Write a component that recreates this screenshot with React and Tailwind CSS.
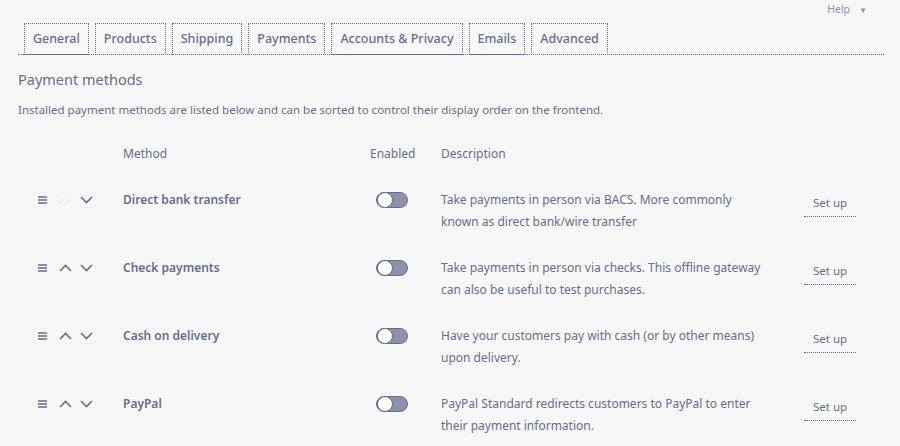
import React from "react";

const tabs = ["General", "Products", "Shipping", "Payments", "Accounts & Privacy", "Emails", "Advanced"];

const methods = [
  {
    name: "Direct bank transfer",
    desc: "Take payments in person via BACS. More commonly known as direct bank/wire transfer",
    first: true,
  },
  {
    name: "Check payments",
    desc: "Take payments in person via checks. This offline gateway can also be useful to test purchases.",
  },
  {
    name: "Cash on delivery",
    desc: "Have your customers pay with cash (or by other means) upon delivery.",
  },
  {
    name: "PayPal",
    desc: "PayPal Standard redirects customers to PayPal to enter their payment information.",
  },
];

const Handle = () => (
  <svg width="9" height="8" viewBox="0 0 9 8" className="shrink-0">
    <path d="M0 1h9M0 4h9M0 7h9" stroke="currentColor" strokeWidth="1.4" />
  </svg>
);

const Chevron = ({ up, faint }) => (
  <svg
    width="13"
    height="8"
    viewBox="0 0 13 8"
    className={faint ? "shrink-0 opacity-30" : "shrink-0"}
  >
    <path
      d={up ? "M1 7l5.5-5.5L12 7" : "M1 1l5.5 5.5L12 1"}
      fill="none"
      stroke="currentColor"
      strokeWidth="1.6"
      strokeDasharray={faint ? "1 3" : undefined}
    />
  </svg>
);

const Toggle = () => (
  <div className="relative w-[32px] h-[16px] rounded-full bg-[#8d91aa] border border-[#676d8a]">
    <div className="absolute left-0 top-[-1px] w-[16px] h-[16px] rounded-full bg-white border-[1.5px] border-[#676d8a]" />
  </div>
);

const MethodRow = ({ method }) => (
  <div className="grid grid-cols-[105px_247px_71px_363px_60px] py-[12px]">
    <div className="flex items-center h-[22px] pl-[20px] gap-[12px]">
      <Handle />
      <div className="flex items-center gap-[8px]">
        <Chevron up faint={method.first} />
        <Chevron />
      </div>
    </div>
    <div className="h-[22px] flex items-center text-[12px] font-semibold">{method.name}</div>
    <div className="h-[22px] flex items-center pl-[6px]">
      <Toggle />
    </div>
    <p className="w-[322px] text-[12px] leading-[22px]">{method.desc}</p>
    <div>
      <button className="text-[11.5px] leading-[20px] w-[52px] pb-[3px] border-b border-dotted border-[#676d8a]">
        Set up
      </button>
    </div>
  </div>
);

export default function App() {
  return (
    <div className="min-h-screen bg-[#f7f7f7] text-[#676d8a] font-['Noto_Sans',sans-serif]">
      <div className="h-[23px] flex justify-end items-start pr-[33px] pt-[2px]">
        <span className="text-[10.5px] text-[#8c90a8] flex items-center gap-[9px]">
          Help <span className="text-[8px]">▼</span>
        </span>
      </div>

      <div className="ml-[18px] mr-[16px] flex items-end gap-[6px] pl-[6px] border-b border-dotted border-[#676d8a]">
        {tabs.map((t) => (
          <div
            key={t}
            className={
              t === "Payments"
                ? "-mb-px h-[32px] px-[8px] flex items-center text-[12.5px] font-medium border border-dotted border-[#676d8a] border-b-[#f7f7f7]"
                : "-mb-px h-[32px] px-[8px] flex items-center text-[12.5px] font-medium border border-dotted border-[#676d8a]"
            }
          >
            {t}
          </div>
        ))}
      </div>

      <div className="px-[18px]">
        <h2 className="mt-[14px] text-[14.5px] leading-[20px]">Payment methods</h2>
        <p className="mt-[12px] text-[11.5px] leading-[18px]">
          Installed payment methods are listed below and can be sorted to control their display order on the frontend.
        </p>

        <div className="mt-[12px]">
          <div className="grid grid-cols-[105px_247px_71px_363px_60px] py-[12px] text-[12px] leading-[22px]">
            <div />
            <div>Method</div>
            <div>Enabled</div>
            <div>Description</div>
            <div />
          </div>
          {methods.map((m) => (
            <MethodRow key={m.name} method={m} />
          ))}
        </div>
      </div>
    </div>
  );
}
